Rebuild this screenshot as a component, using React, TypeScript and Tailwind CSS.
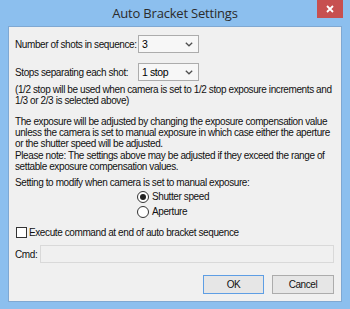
import React from "react";

const Chevron = () => (
  <svg width="8" height="5" viewBox="0 0 8 5" className="shrink-0">
    <path d="M0.8 0.8 L4 3.8 L7.2 0.8" fill="none" stroke="#505050" strokeWidth="1.3" />
  </svg>
);

function Select({ value }: { value: string }) {
  return (
    <div className="flex h-[18px] w-[61px] items-center justify-between border border-[#acacac] bg-[#f7f7f7] pl-[3px] pr-[5px]">
      <span className="text-[10.5px] text-black">{value}</span>
      <Chevron />
    </div>
  );
}

export default function App() {
  return (
    <div
      className="flex h-[309px] w-[350px] flex-col overflow-hidden bg-[#8cbfee] text-[#111]"
      style={{ fontFamily: "'Liberation Sans', Arial, sans-serif" }}
    >
      {/* title bar */}
      <div className="relative flex h-[26px] shrink-0 items-center justify-center">
        <span
          className="mt-[1px] text-[13px] tracking-[-0.2px] text-[#2b2b2b]"
          style={{ fontFamily: "'Open Sans', 'Noto Sans', sans-serif" }}
        >
          Auto Bracket Settings
        </span>
        <div className="absolute right-[7px] top-0 flex h-[18px] w-[26px] items-center justify-center bg-[#c75050]">
          <svg width="8" height="8" viewBox="0 0 8 8">
            <path d="M1 1 L7 7 M7 1 L1 7" stroke="#fff" strokeWidth="1.8" />
          </svg>
        </div>
      </div>

      {/* client area */}
      <div className="mx-[8px] mb-[7px] flex min-h-0 flex-1 flex-col whitespace-nowrap border border-[#7fa8d2] bg-[#f0f0f0] pl-[6px] pr-[7px] text-[10px] leading-[11px] tracking-[-0.4px]">
        <div className="mt-[8px] flex items-center">
          <span className="w-[123px]">Number of shots in sequence:</span>
          <Select value="3" />
        </div>
        <div className="mt-[10px] flex items-center">
          <span className="w-[123px]">Stops separating each shot:</span>
          <Select value="1 stop" />
        </div>
        <p className="mt-[3px]">
          (1/2 stop will be used when camera is set to 1/2 stop exposure increments and
          <br />
          1/3 or 2/3 is selected above)
        </p>
        <p className="mt-[10px]">
          The exposure will be adjusted by changing the exposure compensation value
          <br />
          unless the camera is set to manual exposure in which case either the aperture
          <br />
          or the shutter speed will be adjusted.
        </p>
        <p className="mt-[1px]">
          Please note: The settings above may be adjusted if they exceed the range of
          <br />
          settable exposure compensation values.
        </p>
        <p className="mt-[5px]">Setting to modify when camera is set to manual exposure:</p>

        <div className="mt-[1px] flex flex-col pl-[122px]">
          <label className="flex h-[15px] items-center gap-[3px]">
            <span className="flex h-[12px] w-[12px] items-center justify-center rounded-full border border-[#333] bg-white">
              <span className="h-[6px] w-[6px] rounded-full bg-[#222]" />
            </span>
            Shutter speed
          </label>
          <label className="flex h-[15px] items-center gap-[3px]">
            <span className="h-[12px] w-[12px] rounded-full border border-[#333] bg-white" />
            Aperture
          </label>
        </div>

        <label className="mt-[8px] flex items-center gap-[2px] pl-[1px]">
          <span className="h-[11px] w-[11px] border border-[#333] bg-white" />
          Execute command at end of auto bracket sequence
        </label>

        <div className="mt-[7px] flex items-center">
          <span className="w-[25px]">Cmd:</span>
          <div className="h-[18px] flex-1 border border-[#d9d9d9] bg-[#f0f0f0]" />
        </div>

        <div className="mt-[12px] flex justify-end gap-[8px]">
          <div className="flex h-[19px] w-[61px] items-center justify-center border border-[#5e9ee4] bg-[#e6e6e6]">
            OK
          </div>
          <div className="flex h-[19px] w-[62px] items-center justify-center border border-[#acacac] bg-[#e6e6e6]">
            Cancel
          </div>
        </div>
      </div>
    </div>
  );
}
